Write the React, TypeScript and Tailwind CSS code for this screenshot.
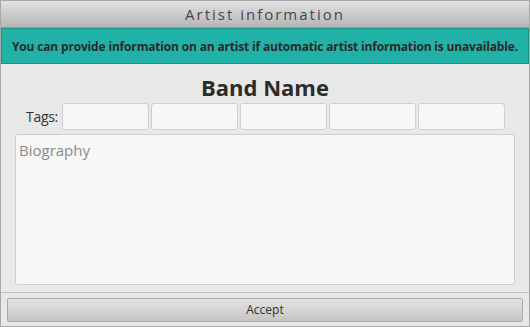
import React from 'react';

const tags = [0, 1, 2, 3, 4];

const App = () => {
  return (
    <div
      className="w-[530px] h-[327px] flex flex-col bg-[#e8e8e8] border border-[#a8a8a8] overflow-hidden"
      style={{ fontFamily: '"Open Sans", "Noto Sans", sans-serif' }}
    >
      {/* Title bar */}
      <div className="h-[27px] shrink-0 flex items-center justify-center bg-gradient-to-b from-[#e2e2e2] to-[#b6b6b6] border-b border-[#9c9c9c]">
        <span className="text-[15px] tracking-[2px] text-[#474747] leading-none">Artist information</span>
      </div>

      {/* Banner */}
      <div className="h-[36px] shrink-0 flex items-center justify-center bg-[#20b2a6] border border-[#179488]">
        <span className="text-[12px] font-bold text-[#2a2a2a] tracking-[-0.17px] pt-[1px]">
          You can provide information on an artist if automatic artist information is unavailable.
        </span>
      </div>

      {/* Content */}
      <div className="flex-1 flex flex-col px-[14px] pt-[9px] pb-[7px]">
        <div className="text-center text-[22px] font-bold text-[#2b2b2b] leading-[28px]">Band Name</div>
        <div className="flex items-center mt-[2px] pl-[11px] gap-[2px]">
          <span className="text-[14px] text-[#333] mr-[2px] tracking-[-0.3px]">Tags:</span>
          {tags.map((t) => (
            <div
              key={t}
              className="w-[87px] h-[27px] bg-[#f7f7f7] border border-[#cfcfcf] rounded-[3px]"
            />
          ))}
        </div>
        <div className="mt-[4px] flex-1 bg-[#f7f7f7] border border-[#cfcfcf] rounded-[3px] px-[3px] pt-[3px]">
          <span className="text-[15px] text-[#8a8a8a] leading-none">Biography</span>
        </div>
      </div>

      {/* Footer */}
      <div className="h-[34px] shrink-0 border-t border-[#c4c4c4] px-[6px] pt-[5px]">
        <div className="h-[24px] w-[516px] flex items-center justify-center bg-gradient-to-b from-[#e4e4e4] to-[#c4c4c4] border border-[#a9a9a9] rounded-[2px]">
          <span className="text-[12px] text-[#333]">Accept</span>
        </div>
      </div>
    </div>
  );
};

export default App;
